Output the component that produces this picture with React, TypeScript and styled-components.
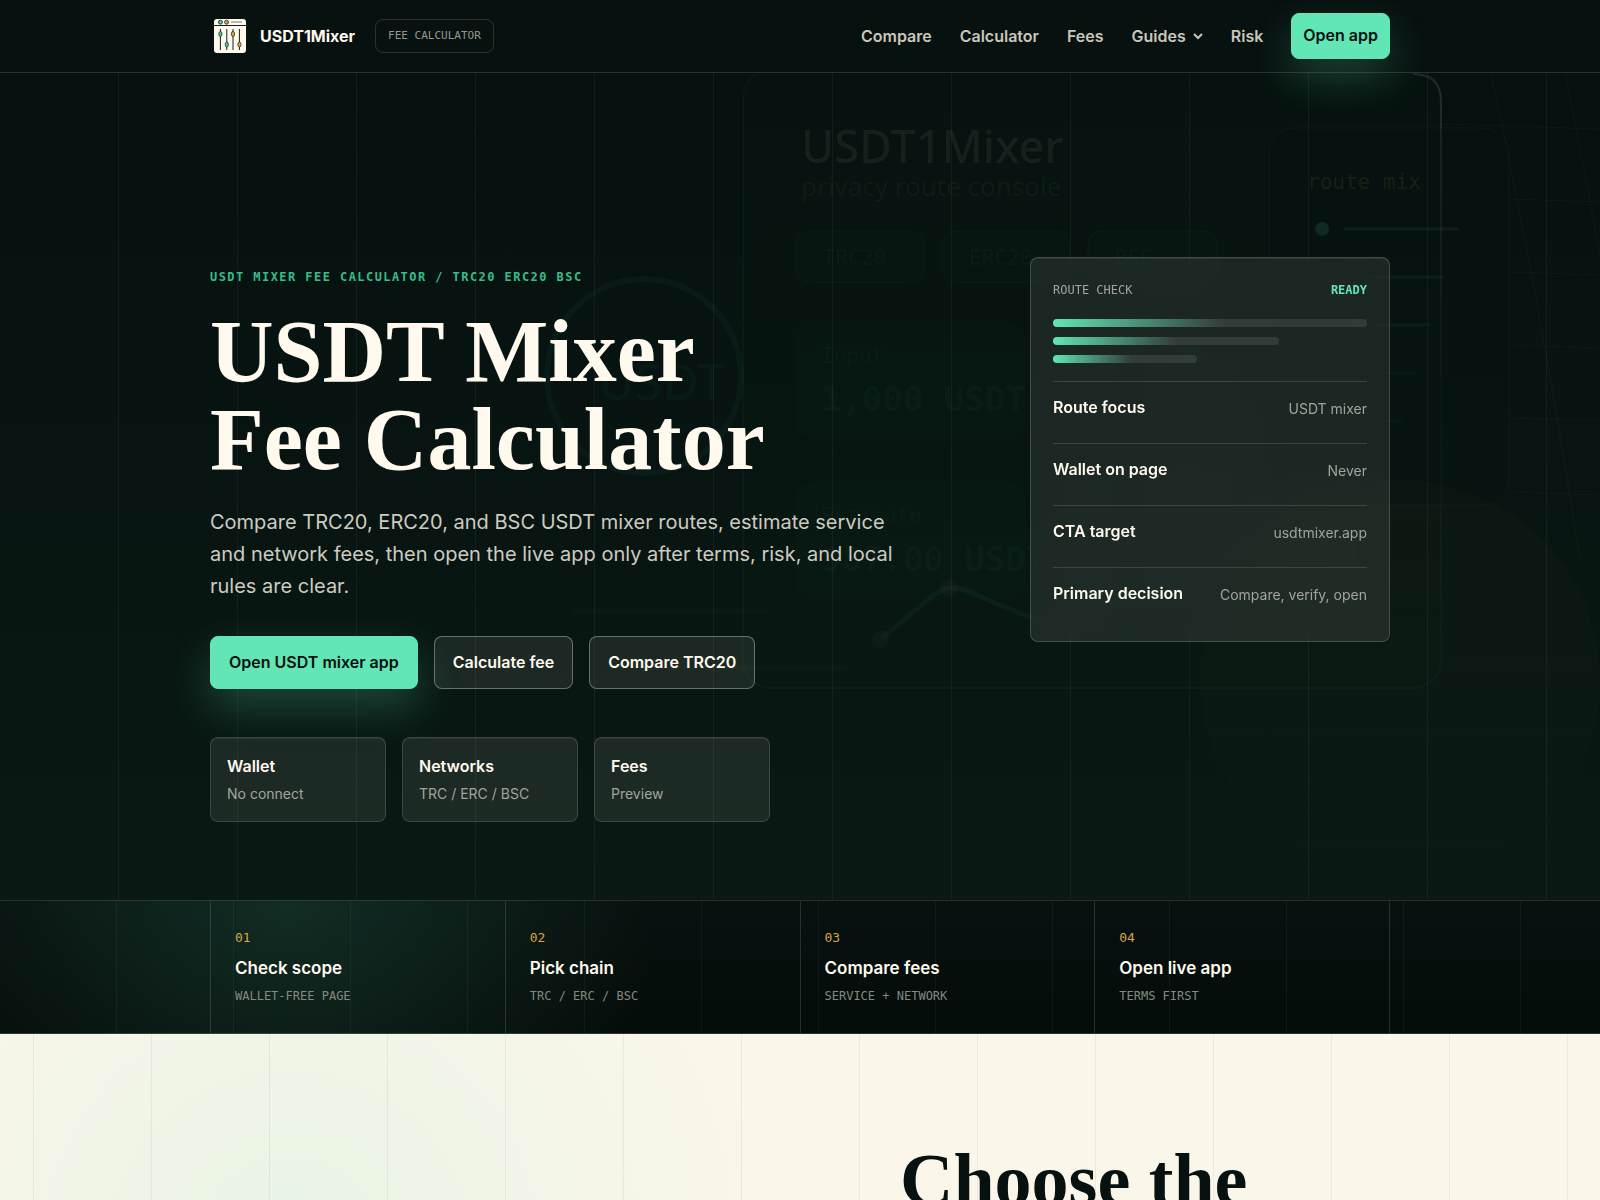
import React from "react";
import styled, { createGlobalStyle } from "styled-components";

const sans = `Inter, "Liberation Sans", sans-serif`;
const serif = `"Liberation Serif", serif`;
const mono = `"DejaVu Sans Mono", monospace`;

const c = {
  ink: "#07110f",
  cream: "#fff9ee",
  mint: "#62e6b5",
  gold: "#d9a441",
  paper: "#fbf6ea",
  line: "rgba(255, 249, 238, 0.14)",
  soft: "#c9c6bb",
  muted: "#a3a49c",
};

const GlobalStyle = createGlobalStyle`
  *, *::before, *::after { box-sizing: border-box; }
  body {
    margin: 0;
    background: ${c.paper};
    color: ${c.cream};
    font-family: ${sans};
    font-size: 16px;
    line-height: 24px;
  }
  a { color: inherit; text-decoration: none; }
  h1, h2, p, dl, dd, ol { margin: 0; padding: 0; }
`;

const Container = styled.div`
  width: 100%;
  max-width: 1228px;
  margin: 0 auto;
  padding: 0 24px;
`;

const Header = styled.header`
  position: relative;
  z-index: 2;
  background: ${c.ink};
  border-bottom: 1px solid ${c.line};
`;

const HeaderRow = styled(Container)`
  min-height: 72px;
  display: flex;
  align-items: center;
  justify-content: space-between;
`;

const BrandGroup = styled.div`
  display: flex;
  align-items: center;
  gap: 20px;
`;

const Brand = styled.a`
  display: flex;
  align-items: center;
  gap: 10px;
  font-weight: 700;
`;

const Tag = styled.span`
  padding: 4px 12px;
  border: 1px solid ${c.line};
  border-radius: 8px;
  color: #96988f;
  font: 11px/24px ${mono};
`;

const Nav = styled.nav`
  display: flex;
  align-items: center;
  gap: 28px;
  color: ${c.soft};
  font-weight: 600;
`;

const MenuButton = styled.button`
  display: flex;
  align-items: center;
  gap: 7px;
  padding: 0;
  border: 0;
  background: none;
  color: inherit;
  font: inherit;
  cursor: pointer;
`;

const Action = styled.a<{ $primary?: boolean; $compact?: boolean }>`
  display: inline-flex;
  align-items: center;
  justify-content: center;
  min-height: ${(p) => (p.$compact ? 46 : 53)}px;
  padding: 0 ${(p) => (p.$compact ? 11 : 18)}px 2px;
  border: 1px solid ${(p) => (p.$primary ? c.mint : "rgba(255, 249, 238, 0.34)")};
  border-radius: 8px;
  background: ${(p) => (p.$primary ? c.mint : "rgba(255, 249, 238, 0.08)")};
  color: ${(p) => (p.$primary ? c.ink : c.cream)};
  font-weight: 600;
  box-shadow: ${(p) => (p.$primary ? "0 18px 44px rgba(98, 230, 181, 0.24)" : "none")};
`;

const Hero = styled.section`
  position: relative;
  overflow: hidden;
  padding: 184px 0 78px;
  background:
    repeating-linear-gradient(90deg, transparent 0 118px, rgba(255, 249, 238, 0.05) 118px 119px),
    linear-gradient(180deg, #06110f 0%, #071411 45%, #0a1914 100%);
`;

const Art = styled.svg`
  position: absolute;
  top: 0;
  left: 50%;
  width: 1600px;
  height: 827px;
  margin-left: -800px;
`;

const HeroRow = styled(Container)`
  position: relative;
  display: grid;
  grid-template-columns: minmax(0, 1fr) 360px;
  gap: 100px;
  align-items: start;
`;

const Copy = styled.div`
  padding-top: 10px;
`;

const Eyebrow = styled.p`
  margin-bottom: 20px;
  color: #35bd8c;
  font: 700 12px/21px ${mono};
  letter-spacing: 0.12em;
`;

const Title = styled.h1`
  font: 700 88px/88px ${serif};
`;

const Lede = styled.p`
  max-width: 700px;
  margin-top: 22px;
  color: #cdcbc1;
  font-size: 20px;
  line-height: 32px;
`;

const Actions = styled.div`
  display: flex;
  flex-wrap: wrap;
  gap: 16px;
  margin-top: 34px;
`;

const Facts = styled.div`
  display: grid;
  grid-template-columns: repeat(3, 1fr);
  gap: 16px;
  max-width: 560px;
  margin-top: 48px;
`;

const Fact = styled.div`
  display: grid;
  gap: 4px;
  padding: 16px;
  border: 1px solid ${c.line};
  border-radius: 8px;
  background: rgba(255, 249, 238, 0.08);
  box-shadow: inset 0 1px 0 rgba(255, 249, 238, 0.06);
`;

const FactName = styled.strong`
  font-weight: 600;
`;

const FactText = styled.span`
  color: ${c.muted};
  font-size: 14px;
  line-height: 23px;
`;

const Panel = styled.aside`
  padding: 22px;
  border: 1px solid rgba(255, 249, 238, 0.18);
  border-radius: 8px;
  background: rgba(255, 249, 238, 0.085);
  backdrop-filter: blur(16px);
  box-shadow: inset 0 1px 0 rgba(255, 249, 238, 0.08);
`;

const PanelHead = styled.div`
  display: flex;
  justify-content: space-between;
  color: ${c.muted};
  font: 12px/21px ${mono};
`;

const Ready = styled.strong`
  color: ${c.mint};
`;

const Bars = styled.div`
  display: grid;
  gap: 10px;
  margin: 18px 0;
`;

const Bar = styled.span<{ $width: number }>`
  width: ${(p) => p.$width}%;
  height: 8px;
  border-radius: 4px;
  background: linear-gradient(90deg, ${c.mint}, transparent 55%), rgba(255, 249, 238, 0.1);
`;

const Checks = styled.dl`
  display: grid;
  gap: 10px;
`;

const Check = styled.div`
  display: flex;
  align-items: center;
  justify-content: space-between;
  min-height: 52px;
  border-top: 1px solid ${c.line};
`;

const CheckName = styled.dt`
  padding-bottom: 2px;
  font-weight: 600;
`;

const CheckValue = styled.dd`
  padding-top: 2px;
  color: ${c.muted};
  font-size: 14px;
`;

const Strip = styled.section`
  border-top: 1px solid ${c.line};
  border-bottom: 1px solid ${c.line};
  background:
    repeating-linear-gradient(90deg, transparent 0 116px, rgba(255, 249, 238, 0.045) 116px 117px),
    radial-gradient(circle at 18% 0%, rgba(98, 230, 181, 0.13), transparent 370px),
    linear-gradient(180deg, #07110f, #040c09);
`;

const Steps = styled.ol`
  display: grid;
  grid-template-columns: repeat(4, 1fr);
  list-style: none;
  border-right: 1px solid ${c.line};
`;

const Step = styled.li`
  display: grid;
  align-content: start;
  gap: 6px;
  min-height: 132px;
  padding: 25px 24px;
  border-left: 1px solid ${c.line};
`;

const StepNumber = styled.span`
  color: ${c.gold};
  font: 13px/24px ${mono};
`;

const StepName = styled.strong`
  font-size: 17px;
  font-weight: 600;
`;

const StepNote = styled.span`
  color: #858981;
  font: 12px/20px ${mono};
`;

const Choose = styled.section`
  padding-top: 110px;
  color: ${c.ink};
  background:
    linear-gradient(90deg, rgba(7, 17, 15, 0.06) 1px, transparent 1px) center top / 118px 100%,
    radial-gradient(circle at 290px 220px, rgba(98, 230, 181, 0.12), transparent 480px),
    ${c.paper};
`;

const ChooseRow = styled(Container)`
  display: grid;
  grid-template-columns: minmax(0, 1fr) 490px;
`;

const Heading = styled.h2`
  grid-column: 2;
  font: 700 74px/72px ${serif};
`;

const Logo = () => (
  <svg width="40" height="40" viewBox="0 0 40 40" aria-hidden="true">
    <rect x="4" y="3" width="32" height="34" rx="3" fill={c.cream} />
    <path d="M4 9.5h32" stroke="#17211e" strokeWidth="1" />
    <path d="M21 6h11" stroke="#777a73" strokeWidth="1" />
    <circle cx="10.4" cy="6.2" r="2" fill="#3fcf9a" stroke="#17211e" strokeWidth=".8" />
    <circle cx="16.6" cy="6.2" r="2" fill={c.gold} stroke="#17211e" strokeWidth=".8" />
    {[
      [10.4, 18, "#3fcf9a"],
      [16.8, 28.5, "#3fcf9a"],
      [23, 18, c.gold],
      [29.4, 28.5, c.gold],
    ].map(([x, y, fill]) => (
      <g key={String(x)}>
        <path d={`M${x} 13v21`} stroke="#17211e" strokeWidth="1" />
        <ellipse cx={x} cy={y} rx="1.6" ry="2.6" fill={String(fill)} stroke="#17211e" strokeWidth=".7" />
      </g>
    ))}
  </svg>
);

const HeroArt = () => (
  <Art viewBox="0 73 1600 827" aria-hidden="true" fill="none">
    <defs>
      <linearGradient id="glow" x1="0" y1="480" x2="0" y2="900" gradientUnits="userSpaceOnUse">
        <stop offset="0" stopColor={c.gold} stopOpacity=".022" />
        <stop offset="1" stopColor={c.gold} stopOpacity="0" />
      </linearGradient>
      <linearGradient id="edge" x1="0" y1="73" x2="0" y2="400" gradientUnits="userSpaceOnUse">
        <stop offset="0" stopColor={c.cream} stopOpacity=".1" />
        <stop offset="1" stopColor={c.cream} stopOpacity="0" />
      </linearGradient>
    </defs>
    <circle cx="1400" cy="680" r="200" fill="url(#glow)" />
    <g stroke={c.cream} strokeOpacity=".03">
      <path d="M1442 124l158 5M1509 199l91 3M1509 272l91 3M1509 345l91 3M1509 418l91 3M1509 492l91 3" />
      <path d="M1491 73Q1540 300 1580 560M1565 73l35 180" />
    </g>
    <rect x="743" y="70" width="698" height="618" rx="28" fill={c.mint} fillOpacity=".006" stroke={c.mint} strokeOpacity=".035" strokeWidth="2" />
    <path d="M1413 74q28 0 28 28v300" stroke="url(#edge)" strokeWidth="2" />
    <rect x="1269" y="128" width="240" height="377" rx="26" fill={c.ink} fillOpacity=".25" stroke={c.cream} strokeOpacity=".03" />
    <g stroke={c.mint} strokeOpacity=".045" fill={c.mint} fillOpacity=".01">
      <rect x="796" y="231" width="128" height="51" rx="14" />
      <rect x="942" y="231" width="128" height="51" rx="14" />
      <rect x="1088" y="231" width="129" height="51" rx="14" />
      <rect x="796" y="322" width="229" height="118" rx="20" strokeOpacity=".015" />
      <rect x="796" y="482" width="229" height="117" rx="20" strokeOpacity=".015" />
    </g>
    <g fill={c.cream} fontFamily='"Noto Sans", sans-serif'>
      <text x="801" y="163" fontSize="45" fontWeight="500" fillOpacity=".065">USDT1Mixer</text>
      <text x="801" y="196" fontSize="26" fillOpacity=".05">privacy route console</text>
    </g>
    <g fill={c.mint} fillOpacity=".05" fontFamily={mono}>
      <text x="823" y="265" fontSize="21">TRC20</text>
      <text x="969" y="265" fontSize="21">ERC20</text>
      <text x="1115" y="265" fontSize="21">BSC</text>
      <text x="821" y="363" fontSize="21" fillOpacity=".035">Input</text>
      <text x="821" y="411" fontSize="34" fontWeight="700">1,000 USDT</text>
      <text x="821" y="523" fontSize="21" fillOpacity=".035">Estimate</text>
      <text x="821" y="571" fontSize="34" fontWeight="700" fillOpacity=".035">987.00 USDT</text>
      <text x="806" y="774" fontSize="21" fillOpacity=".02">local deposits</text>
    </g>
    <text x="1307" y="189" fontSize="21" fill={c.gold} fillOpacity=".1" fontFamily={mono}>route mix</text>
    <circle cx="644" cy="376" r="97" stroke={c.mint} strokeOpacity=".04" strokeWidth="6" />
    <text x="598" y="400" fontSize="50" fontWeight="500" fill={c.mint} fillOpacity=".035" fontFamily='"Noto Sans", sans-serif'>USDT</text>
    <path d="M572 611h195M640 668h207" stroke={c.gold} strokeOpacity=".025" strokeWidth="5" />
    <path d="M881 639L930 598Q949 582 970 592T1030 617T1110 600" stroke={c.mint} strokeOpacity=".04" strokeWidth="5" />
    <g fill="#e07a5a" fillOpacity=".04">
      <circle cx="881" cy="639" r="9" />
      <circle cx="949" cy="588" r="9" />
    </g>
    <circle cx="1322" cy="229" r="7" fill={c.mint} fillOpacity=".11" />
    <g stroke={c.mint} strokeWidth="3">
      <path d="M1344 229h114" strokeOpacity=".07" />
      <path d="M1344 277h100M1344 325h86" strokeOpacity=".05" />
      <path d="M1344 373h73M1344 421h59" strokeOpacity=".03" />
    </g>
  </Art>
);

const facts = [
  ["Wallet", "No connect"],
  ["Networks", "TRC / ERC / BSC"],
  ["Fees", "Preview"],
];

const checks = [
  ["Route focus", "USDT mixer"],
  ["Wallet on page", "Never"],
  ["CTA target", "usdtmixer.app"],
  ["Primary decision", "Compare, verify, open"],
];

const steps = [
  ["01", "Check scope", "WALLET-FREE PAGE"],
  ["02", "Pick chain", "TRC / ERC / BSC"],
  ["03", "Compare fees", "SERVICE + NETWORK"],
  ["04", "Open live app", "TERMS FIRST"],
];

export default function App() {
  return (
    <>
      <GlobalStyle />
      <Header>
        <HeaderRow>
          <BrandGroup>
            <Brand href="#top">
              <Logo />
              USDT1Mixer
            </Brand>
            <Tag>FEE CALCULATOR</Tag>
          </BrandGroup>
          <Nav aria-label="Main">
            <a href="#compare">Compare</a>
            <a href="#calculator">Calculator</a>
            <a href="#fees">Fees</a>
            <MenuButton type="button" aria-haspopup="true">
              Guides
              <svg width="10" height="7" viewBox="0 0 10 7" fill="none" aria-hidden="true">
                <path d="M1 1l4 4 4-4" stroke="currentColor" strokeWidth="2" />
              </svg>
            </MenuButton>
            <a href="#risk">Risk</a>
            <Action href="#app" $primary $compact>Open app</Action>
          </Nav>
        </HeaderRow>
      </Header>
      <main>
        <Hero id="top">
          <HeroArt />
          <HeroRow>
            <Copy>
              <Eyebrow>USDT MIXER FEE CALCULATOR / TRC20 ERC20 BSC</Eyebrow>
              <Title>
                USDT Mixer
                <br />
                Fee Calculator
              </Title>
              <Lede>
                Compare TRC20, ERC20, and BSC USDT mixer routes, estimate service and network fees, then open the live
                app only after terms, risk, and local rules are clear.
              </Lede>
              <Actions>
                <Action href="#app" $primary>Open USDT mixer app</Action>
                <Action href="#calculator">Calculate fee</Action>
                <Action href="#compare">Compare TRC20</Action>
              </Actions>
              <Facts>
                {facts.map(([name, text]) => (
                  <Fact key={name}>
                    <FactName>{name}</FactName>
                    <FactText>{text}</FactText>
                  </Fact>
                ))}
              </Facts>
            </Copy>
            <Panel>
              <PanelHead>
                <span>ROUTE CHECK</span>
                <Ready>READY</Ready>
              </PanelHead>
              <Bars aria-hidden="true">
                <Bar $width={100} />
                <Bar $width={72} />
                <Bar $width={46} />
              </Bars>
              <Checks>
                {checks.map(([name, value]) => (
                  <Check key={name}>
                    <CheckName>{name}</CheckName>
                    <CheckValue>{value}</CheckValue>
                  </Check>
                ))}
              </Checks>
            </Panel>
          </HeroRow>
        </Hero>
        <Strip>
          <Container>
            <Steps>
              {steps.map(([number, name, note]) => (
                <Step key={number}>
                  <StepNumber>{number}</StepNumber>
                  <StepName>{name}</StepName>
                  <StepNote>{note}</StepNote>
                </Step>
              ))}
            </Steps>
          </Container>
        </Strip>
        <Choose>
          <ChooseRow>
            <Heading>Choose the</Heading>
          </ChooseRow>
        </Choose>
      </main>
    </>
  );
}
